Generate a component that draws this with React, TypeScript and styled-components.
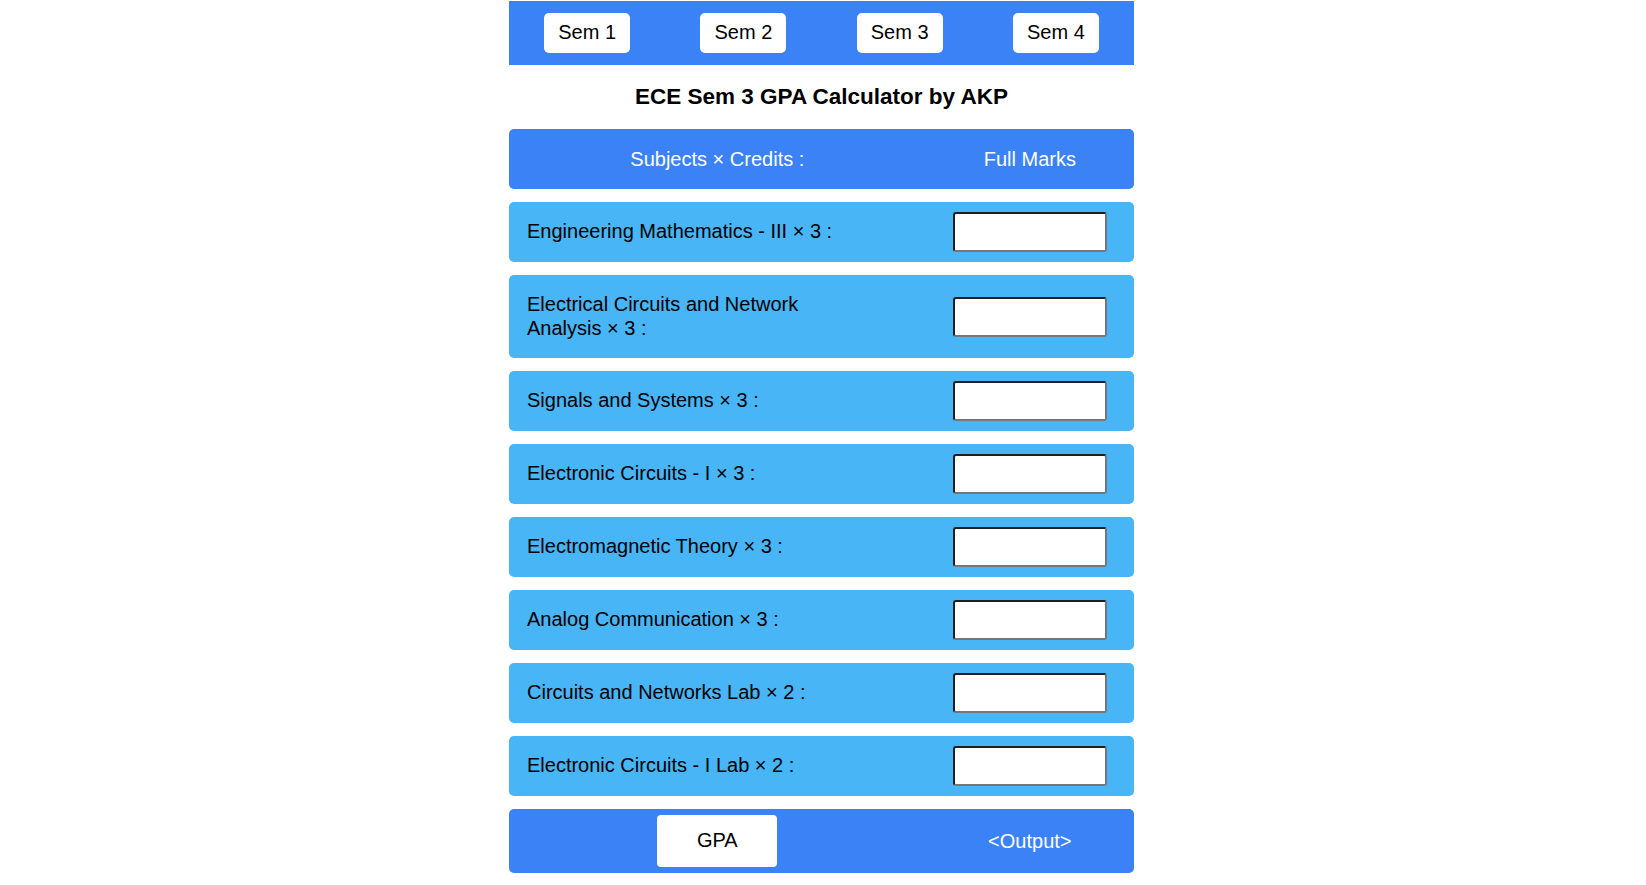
import React from "react";
import styled, { createGlobalStyle } from "styled-components";

const GlobalStyle = createGlobalStyle`
  html, body {
    margin: 0;
    padding: 0;
    background: #ffffff;
  }
  body {
    font-family: "Liberation Sans", Arial, sans-serif;
    color: #000;
  }
`;

const Page = styled.div`
  width: 625px;
  margin-left: calc(50% - 314px);
  padding-top: 1px;
  display: flex;
  flex-direction: column;
`;

const Nav = styled.nav`
  height: 64px;
  background: #3b82f6;
  display: grid;
  grid-template-columns: repeat(4, 1fr);
  align-items: center;
  justify-items: center;
`;

const NavButton = styled.button`
  height: 40px;
  width: 86px;
  border: none;
  border-radius: 5px;
  background: #ffffff;
  color: #000;
  font-family: "Liberation Sans", Arial, sans-serif;
  font-size: 20px;
  line-height: 22px;
  padding: 0 0 2px;
  cursor: pointer;
`;

const Title = styled.h2`
  margin: 0;
  padding: 18px 0;
  line-height: 28px;
  font-size: 22.5px;
  font-weight: bold;
  text-align: center;
`;

const Stack = styled.div`
  display: flex;
  flex-direction: column;
  gap: 13px;
`;

const Bar = styled.div<{ $tone: "dark" | "light"; $h?: number }>`
  display: grid;
  grid-template-columns: 2fr 1fr;
  align-items: center;
  border-radius: 5px;
  background: ${(p) => (p.$tone === "dark" ? "#3b82f6" : "#47b5f6")};
  min-height: ${(p) => (p.$h ? `${p.$h}px` : "60px")};
`;

const HeadCell = styled.div`
  color: #ffffff;
  font-size: 20px;
  line-height: 23px;
  text-align: center;
`;

const Label = styled.div`
  font-size: 20px;
  line-height: 23.5px;
  padding: 18px 72px 18px 18px;
  color: #000;
`;

const InputCell = styled.div`
  display: flex;
  justify-content: center;
  align-items: center;
`;

const MarkInput = styled.input`
  box-sizing: border-box;
  width: 154px;
  height: 40px;
  border: 2px solid;
  border-color: #1f1f1f #767676 #767676 #1f1f1f;
  border-radius: 3px;
  background: #ffffff;
  font-size: 18px;
  font-family: "Liberation Sans", Arial, sans-serif;
  padding: 0 6px;
  outline: none;
`;

const GpaCell = styled.div`
  display: flex;
  justify-content: center;
  align-items: center;
`;

const GpaButton = styled.button`
  width: 120px;
  height: 52px;
  border: none;
  border-radius: 4px;
  background: #ffffff;
  color: #000;
  font-family: "Liberation Sans", Arial, sans-serif;
  font-size: 20px;
  line-height: 22px;
  padding: 0 0 2px;
  cursor: pointer;
`;

const subjects = [
  "Engineering Mathematics - III × 3 :",
  "Electrical Circuits and Network Analysis × 3 :",
  "Signals and Systems × 3 :",
  "Electronic Circuits - I × 3 :",
  "Electromagnetic Theory × 3 :",
  "Analog Communication × 3 :",
  "Circuits and Networks Lab × 2 :",
  "Electronic Circuits - I Lab × 2 :",
];

export default function App() {
  return (
    <>
      <GlobalStyle />
      <Page>
        <Nav>
          {["Sem 1", "Sem 2", "Sem 3", "Sem 4"].map((s) => (
            <NavButton key={s}>{s}</NavButton>
          ))}
        </Nav>
        <Title>ECE Sem 3 GPA Calculator by AKP</Title>
        <Stack>
          <Bar $tone="dark" $h={60}>
            <HeadCell>Subjects × Credits :</HeadCell>
            <HeadCell>Full Marks</HeadCell>
          </Bar>
          {subjects.map((s) => (
            <Bar $tone="light" key={s}>
              <Label>{s}</Label>
              <InputCell>
                <MarkInput type="text" />
              </InputCell>
            </Bar>
          ))}
          <Bar $tone="dark" $h={64}>
            <GpaCell>
              <GpaButton>GPA</GpaButton>
            </GpaCell>
            <HeadCell>&lt;Output&gt;</HeadCell>
          </Bar>
        </Stack>
      </Page>
    </>
  );
}
